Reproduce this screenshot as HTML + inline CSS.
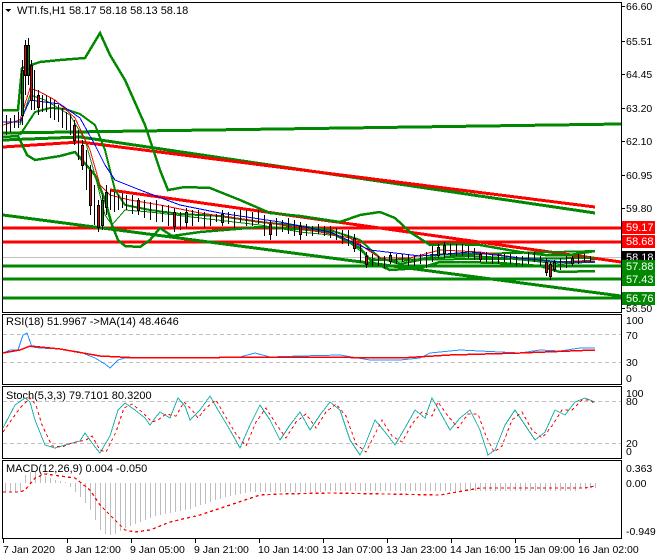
<!DOCTYPE html>
<html><head><meta charset="utf-8"><style>
html,body{margin:0;padding:0;background:#fff;}
svg{display:block;font-family:"Liberation Sans",sans-serif;font-size:11px;}
</style></head><body>
<svg width="660" height="560" viewBox="0 0 660 560" xmlns="http://www.w3.org/2000/svg" shape-rendering="crispEdges">
<rect width="660" height="560" fill="#fff"/>
<g fill="none" stroke="#000" stroke-width="1">
<rect x="2.5" y="2.5" width="619" height="310"/>
<rect x="2.5" y="314.5" width="619" height="70"/>
<rect x="2.5" y="386.5" width="619" height="72"/>
<rect x="2.5" y="460.5" width="619" height="78"/>
</g>
<g stroke-width="3" fill="none">
<line x1="3" y1="228" x2="621" y2="228" stroke="#f00"/>
<line x1="3" y1="242" x2="621" y2="242" stroke="#f00"/>
<line x1="3" y1="266" x2="621" y2="266" stroke="#080"/>
<line x1="3" y1="279" x2="621" y2="279" stroke="#080"/>
<line x1="3" y1="298" x2="621" y2="298" stroke="#080"/>
</g>
<line x1="3" y1="257.5" x2="621" y2="257.5" stroke="#c0c0c0" stroke-width="1"/>
<g stroke-width="3" fill="none">
<line x1="3" y1="133" x2="621" y2="124" stroke="#080"/>
<polyline points="3,140 80,137 595,213" stroke="#080"/>
<polyline points="3,147 80,142 595,207" stroke="#f00"/>
<line x1="110" y1="190" x2="621" y2="262" stroke="#f00"/>
<line x1="3" y1="215" x2="621" y2="296" stroke="#080"/>
<polyline points="370,260 595,258" stroke="#080" stroke-width="2"/>
<polyline points="430,255 595,251" stroke="#080" stroke-width="2"/>
</g>
<g stroke="#080" stroke-width="2.5" fill="none">
<polyline points="3,110 18,110 22,68 40,62 60,60 85,58 100,33 110,55 125,80 145,125 160,170 168,190 185,187 210,188 240,200 270,213 300,216 340,222 360,215 380,212 395,218 410,232 430,245 450,244 480,245 520,252 545,255 570,255 595,251"/>
<polyline points="3,137 18,136 27,155 35,160 60,156 75,152 95,175 105,200 112,225 118,240 125,246 140,247 150,240 160,228 172,236 200,232 260,227 300,229 330,232 345,240 360,248 372,262 390,270 420,268 440,262 460,262 500,263 540,266 560,272 595,271"/>
<polyline points="20,135 35,112 50,108 65,109 80,114 95,125 105,150 115,190 125,205 150,210 180,214 220,216 260,222 300,226 330,230 360,240 380,258 400,264 430,258 470,256 520,259 560,262 595,262" stroke-width="2"/>
</g>
<polyline fill="none" stroke="#080" stroke-width="1" points="20,125 30,95 45,100 70,115 85,140 95,175 105,215 112,225 125,210 150,212 200,218 260,225 300,232 340,236 370,258 400,262 440,255 480,256 520,260 560,264 595,262"/>
<polyline fill="none" stroke="#f00" stroke-width="1" points="3,125 20,120 30,88 40,92 55,100 75,118 90,150 100,185 110,195 130,200 160,205 200,213 250,220 300,228 350,238 380,258 410,258 440,250 480,252 520,258 560,262 595,260"/>
<polyline fill="none" stroke="#00f" stroke-width="1" points="3,122 20,122 30,100 60,104 80,118 95,145 105,165 115,180 140,190 180,205 220,213 280,222 330,232 370,250 420,256 470,252 520,258 560,262 595,262"/>
<path fill="none" stroke="#000" stroke-width="1" d="M6.5 115V135M10.5 118V132M14.5 115V128M18.5 112V128M22.5 60V125M25.5 40V95M28.5 38V85M31.5 60V110M34.5 70V110M38.5 90V115M42.5 95V112M46.5 95V112M50.5 98V118M54.5 100V120M58.5 105V122M62.5 108V128M66.5 112V130M70.5 115V135M74.5 120V145M78.5 130V160M82.5 140V170M86.5 150V190M90.5 165V215M94.5 185V225M98.5 200V232M102.5 195V230M106.5 185V215M110.5 190V210M114.5 192V212M118.5 195V210M122.5 193V208M126.5 195V210M132.5 195V214M138.5 198V215M144.5 200V218M150.5 202V220M156.5 200V222M162.5 205V222M168.5 205V226M174.5 208V232M180.5 212V230M186.5 208V228M192.5 210V226M198.5 210V222M204.5 212V228M210.5 215V226M216.5 214V222M222.5 210V226M228.5 212V224M234.5 212V228M240.5 210V222M246.5 210V226M252.5 212V226M258.5 210V224M264.5 215V236M270.5 220V240M276.5 218V236M282.5 220V232M288.5 218V234M294.5 220V236M300.5 222V240M306.5 224V236M312.5 226V236M318.5 224V234M324.5 226V236M330.5 226V238M336.5 228V240M342.5 230V244M348.5 230V246M354.5 234V252M360.5 244V262M366.5 252V268M372.5 254V266M378.5 256V266M384.5 256V268M390.5 252V264M396.5 254V264M402.5 254V262M408.5 254V266M414.5 256V266M420.5 254V264M426.5 252V268M432.5 246V262M438.5 244V258M444.5 242V258M450.5 244V256M456.5 244V256M462.5 244V256M468.5 246V258M474.5 248V260M480.5 252V262M486.5 252V262M492.5 254V264M498.5 254V264M504.5 254V262M510.5 254V264M516.5 256V266M522.5 256V266M528.5 252V264M534.5 252V262M540.5 256V266M546.5 258V276M550.5 262V280M554.5 260V272M560.5 258V270M566.5 256V268M572.5 256V266M578.5 254V264M584.5 254V262M590.5 256V262"/>
<g fill="#e00" stroke="#000" stroke-width="1">
<rect x="24.5" y="45.5" width="2" height="30"/><rect x="30.5" y="65.5" width="2" height="35"/><rect x="37.5" y="95.5" width="2" height="12"/><rect x="73.5" y="125.5" width="2" height="15"/><rect x="81.5" y="145.5" width="2" height="20"/><rect x="89.5" y="170.5" width="2" height="35"/><rect x="97.5" y="205.5" width="2" height="22"/><rect x="137.5" y="200.5" width="2" height="10"/><rect x="173.5" y="212.5" width="2" height="14"/><rect x="269.5" y="224.5" width="2" height="10"/><rect x="299.5" y="226.5" width="2" height="8"/><rect x="353.5" y="238.5" width="2" height="10"/><rect x="365.5" y="256.5" width="2" height="8"/><rect x="479.5" y="254.5" width="2" height="5"/><rect x="545.5" y="262.5" width="2" height="10"/><rect x="549.5" y="264.5" width="2" height="12"/>
</g>
<g fill="#080" stroke="#000" stroke-width="1">
<rect x="21.5" y="70.5" width="2" height="45"/><rect x="27.5" y="45.5" width="2" height="30"/><rect x="101.5" y="200.5" width="2" height="25"/><rect x="105.5" y="192.5" width="2" height="15"/><rect x="185.5" y="212.5" width="2" height="10"/><rect x="221.5" y="214.5" width="2" height="8"/><rect x="389.5" y="255.5" width="2" height="6"/><rect x="437.5" y="247.5" width="2" height="8"/><rect x="443.5" y="245.5" width="2" height="8"/><rect x="553.5" y="262.5" width="2" height="7"/><rect x="571.5" y="258.5" width="2" height="5"/>
</g>
<polygon points="5,9 11,9 8,12" fill="#000"/>
<text x="17" y="14" fill="#000">WTI.fs,H1  58.17 58.18 58.13 58.18</text>
<g stroke="#000"><line x1="621" y1="6.5" x2="625" y2="6.5"/><line x1="621" y1="41.5" x2="625" y2="41.5"/><line x1="621" y1="74.5" x2="625" y2="74.5"/><line x1="621" y1="108.5" x2="625" y2="108.5"/><line x1="621" y1="141.5" x2="625" y2="141.5"/><line x1="621" y1="175.5" x2="625" y2="175.5"/><line x1="621" y1="208.5" x2="625" y2="208.5"/><line x1="621" y1="308.5" x2="625" y2="308.5"/></g>
<g fill="#000" font-size="10.5">
<text x="626" y="10">66.60</text><text x="626" y="45">65.51</text><text x="626" y="78">64.45</text><text x="626" y="112">63.20</text><text x="626" y="145">62.10</text><text x="626" y="179">60.95</text><text x="626" y="212">59.80</text><text x="626" y="312">56.50</text>
</g>
<rect x="622" y="221" width="33" height="13" fill="#f00"/><text x="626" y="231" fill="#fff">59.17</text>
<rect x="622" y="235" width="33" height="13" fill="#f00"/><text x="626" y="245" fill="#fff">58.68</text>
<rect x="622" y="251" width="33" height="13" fill="#000"/><text x="626" y="261" fill="#fff">58.18</text>
<rect x="622" y="260" width="33" height="13" fill="#080"/><text x="626" y="270" fill="#fff">57.88</text>
<rect x="622" y="273" width="33" height="13" fill="#080"/><text x="626" y="283" fill="#fff">57.43</text>
<rect x="622" y="292" width="33" height="13" fill="#080"/><text x="626" y="302" fill="#fff">56.76</text>
<g stroke="#c0c0c0" stroke-dasharray="4,3"><line x1="3" y1="334.5" x2="621" y2="334.5"/><line x1="3" y1="362.5" x2="621" y2="362.5"/><line x1="3" y1="401.5" x2="621" y2="401.5"/><line x1="3" y1="443.5" x2="621" y2="443.5"/></g>
<text x="6" y="325" fill="#000">RSI(18) 51.9967  -&gt;MA(14) 48.4646</text>
<polyline fill="none" stroke="#1e90ff" stroke-width="1" points="3,353 10,350 18,350 23,335 27,333 32,347 40,348 60,349 80,352 95,358 105,364 110,368 118,360 125,358 160,358 200,358 240,357 255,353 270,357 300,356 340,355 370,360 400,360 420,358 430,353 460,350 500,352 520,353 540,350 560,351 580,348 595,348"/>
<polyline fill="none" stroke="#f00" stroke-width="1.5" points="3,353 20,350 30,346 60,349 100,356 140,358 300,357 400,358 450,355 520,353 595,350"/>
<g fill="#000" font-size="10.5"><text x="626" y="324">100</text><text x="626" y="339">70</text><text x="626" y="366">30</text><text x="626" y="382">0</text>
<text x="626" y="397">100</text><text x="626" y="405">80</text><text x="626" y="447">20</text><text x="626" y="455">0</text>
<text x="626" y="472">0.363</text><text x="626" y="487">0.00</text><text x="626" y="535">-0.949</text></g>
<text x="6" y="399" fill="#000">Stoch(5,3,3) 79.7101 80.3200</text>
<polyline fill="none" stroke="#20b2aa" stroke-width="1" points="3,428 15,405 25,398 30,402 35,420 45,445 55,448 65,445 80,441 85,433 95,447 100,453 110,436 118,410 125,403 135,410 145,418 150,425 155,418 160,412 170,418 178,398 185,406 190,420 200,410 210,396 218,410 230,430 240,448 250,425 260,405 270,420 280,440 290,425 300,412 310,430 320,415 330,402 340,410 350,440 360,455 365,445 375,420 385,432 395,445 405,428 415,410 425,418 432,398 440,412 450,430 460,418 470,410 480,430 488,455 495,450 505,425 515,410 525,425 535,440 545,432 555,410 565,415 575,402 585,398 595,402"/>
<polyline fill="none" stroke="#f00" stroke-width="1" stroke-dasharray="3,3" points="3,432 20,408 30,398 36,405 42,425 52,446 62,447 72,443 86,440 92,436 100,450 106,452 116,432 124,408 132,404 142,412 152,422 158,420 166,414 176,416 184,402 192,410 198,418 206,408 216,400 224,414 236,434 246,446 256,422 266,408 276,424 286,438 296,422 306,414 316,428 326,412 336,404 346,416 356,444 366,452 372,440 382,420 392,436 402,442 412,424 422,412 432,416 438,402 448,416 458,428 468,414 478,414 486,436 494,452 502,446 512,420 522,412 532,430 542,438 552,426 562,410 572,410 582,400 590,400 595,404"/>
<text x="6" y="472" fill="#000">MACD(12,26,9) 0.004 -0.050</text>
<path fill="none" stroke="#bdbdbd" stroke-width="1" d="M5.5 483V492M10.5 483V492M15.5 483V492M20.5 483V492M25.5 483V475M30.5 483V472M35.5 483V472M40.5 483V474M45.5 483V476M50.5 483V478M55.5 483V480M60.5 483V481M65.5 483V482M70.5 483V487M75.5 483V492M80.5 483V497M85.5 483V503M90.5 483V510M95.5 483V520M100.5 483V530M105.5 483V534M110.5 483V535M115.5 483V534M120.5 483V531M125.5 483V528M130.5 483V526M135.5 483V524M140.5 483V522M145.5 483V520M150.5 483V518M155.5 483V516M160.5 483V515M165.5 483V514M170.5 483V513M175.5 483V512M180.5 483V511M185.5 483V510M190.5 483V509M195.5 483V507M200.5 483V505M205.5 483V504M210.5 483V502M215.5 483V500M220.5 483V499M225.5 483V497M230.5 483V496M235.5 483V495M240.5 483V494M245.5 483V493M250.5 483V492M255.5 483V492M260.5 483V492M265.5 483V492M270.5 483V492M275.5 483V492M280.5 483V492M285.5 483V492M290.5 483V492M295.5 483V492M300.5 483V492M305.5 483V492M310.5 483V492M315.5 483V492M320.5 483V492M325.5 483V491M330.5 483V491M335.5 483V491M340.5 483V491M345.5 483V491M350.5 483V491M355.5 483V491M360.5 483V491M365.5 483V491M370.5 483V491M375.5 483V491M380.5 483V491M385.5 483V491M390.5 483V491M395.5 483V491M400.5 483V491M405.5 483V491M410.5 483V491M415.5 483V491M420.5 483V491M425.5 483V491M430.5 483V491M435.5 483V491M440.5 483V491M445.5 483V491M450.5 483V491M455.5 483V491M460.5 483V491M465.5 483V491M470.5 483V491M475.5 483V491M480.5 483V491M485.5 483V491M490.5 483V491M495.5 483V491M500.5 483V491M505.5 483V491M510.5 483V491M515.5 483V491M520.5 483V491M525.5 483V491M530.5 483V491M535.5 483V491M540.5 483V491M545.5 483V491M550.5 483V491M555.5 483V491M560.5 483V491M565.5 483V491M570.5 483V491M575.5 483V491M580.5 483V488M585.5 483V488M590.5 483V488M595.5 483V488"/>
<polyline fill="none" stroke="#f00" stroke-width="1.3" stroke-dasharray="3,3" points="3,492 20,492 25,490 35,478 45,474 75,478 90,490 100,505 115,520 125,530 135,532 150,530 170,522 200,515 230,505 260,495 280,494 330,493 440,495 480,488 585,488 595,486"/>
<g stroke="#000"><line x1="3.5" y1="538" x2="3.5" y2="543"/><line x1="67.5" y1="538" x2="67.5" y2="543"/><line x1="131.5" y1="538" x2="131.5" y2="543"/><line x1="195.5" y1="538" x2="195.5" y2="543"/><line x1="259.5" y1="538" x2="259.5" y2="543"/><line x1="323.5" y1="538" x2="323.5" y2="543"/><line x1="387.5" y1="538" x2="387.5" y2="543"/><line x1="451.5" y1="538" x2="451.5" y2="543"/><line x1="515.5" y1="538" x2="515.5" y2="543"/><line x1="579.5" y1="538" x2="579.5" y2="543"/></g>
<g fill="#000" font-size="10.5">
<text x="3" y="553">7 Jan 2020</text><text x="66" y="553">8 Jan 12:00</text><text x="130" y="553">9 Jan 05:00</text><text x="194" y="553">9 Jan 21:00</text><text x="258" y="553">10 Jan 14:00</text><text x="322" y="553">13 Jan 07:00</text><text x="386" y="553">13 Jan 23:00</text><text x="450" y="553">14 Jan 16:00</text><text x="514" y="553">15 Jan 09:00</text><text x="578" y="553">16 Jan 02:00</text>
</g>
</svg>
</body></html>
